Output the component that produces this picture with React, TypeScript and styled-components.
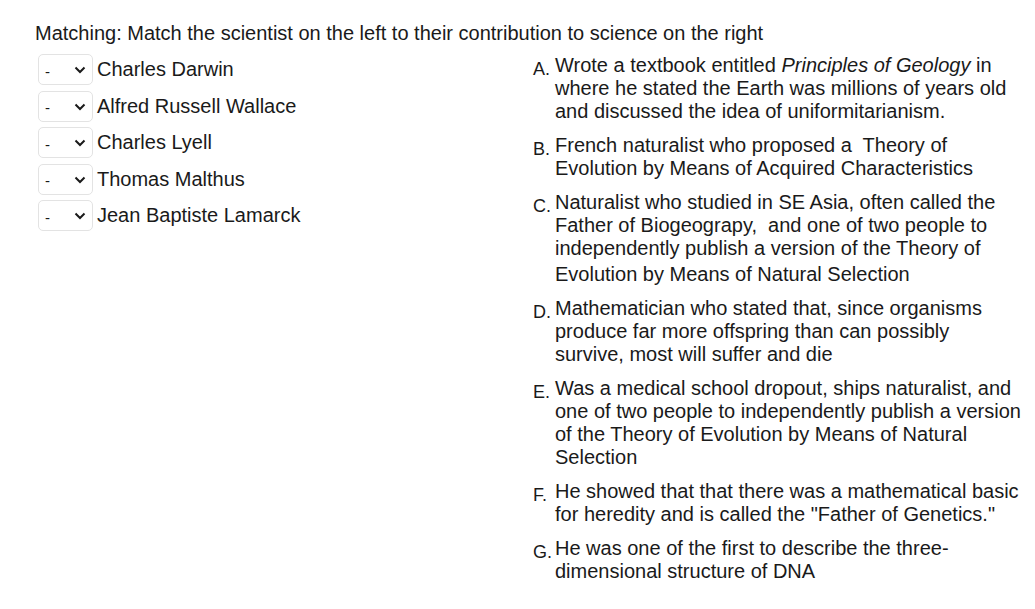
import * as React from 'react'
import styled, { createGlobalStyle } from 'styled-components'

const GlobalStyle = createGlobalStyle`
  body {
    margin: 0;
    background: #ffffff;
    font-family: "Liberation Sans", Arial, sans-serif;
    color: #1a1a1a;
  }
`

const Page = styled.div`
  padding: 21px 0 0 35px;
  width: 1035px;
  box-sizing: border-box;
`

const Prompt = styled.div`
  font-size: 20px;
  line-height: 24px;
  margin-bottom: 9px;
`

const Columns = styled.div`
  display: grid;
  grid-template-columns: 498px 490px;
`

const Stems = styled.div`
  display: flex;
  flex-direction: column;
  gap: 5px;
  padding-left: 3px;
`

const StemRow = styled.div`
  display: flex;
  align-items: center;
  gap: 4px;
  font-size: 20px;
  height: 31.5px;
`

const SelectBox = styled.div`
  position: relative;
  width: 55px;
  height: 31px;
  box-sizing: border-box;
  border: 1px solid #e3e3e3;
  border-radius: 5px;
  background: #fff;
`

const NativeSelect = styled.select`
  appearance: none;
  border: none;
  background: transparent;
  width: 100%;
  height: 100%;
  padding: 3px 0 0 6px;
  font-family: "Liberation Sans", Arial, sans-serif;
  font-size: 15px;
  color: #1a1a1a;
  outline: none;
`

const Chevron = styled.svg`
  position: absolute;
  right: 6px;
  top: 11px;
  pointer-events: none;
`

const Answers = styled.ol`
  list-style: none;
  margin: 0;
  padding: 0;
  display: flex;
  flex-direction: column;
  gap: 11px;
`

const Answer = styled.li`
  display: flex;
  align-items: flex-start;
`

const Letter = styled.span`
  flex: 0 0 22px;
  font-size: 18px;
  line-height: 23px;
  padding-top: 4px;
`

const AnswerText = styled.div`
  font-size: 20px;
  line-height: 23px;
  width: 468px;
`

const LastLine = styled.span`
  display: inline-block;
  margin-top: 3px;
`

const stems = [
  'Charles Darwin',
  'Alfred Russell Wallace',
  'Charles Lyell',
  'Thomas Malthus',
  'Jean Baptiste Lamarck',
]

const Select = () => (
  <SelectBox>
    <NativeSelect defaultValue="-">
      <option>-</option>
      {['A', 'B', 'C', 'D', 'E', 'F', 'G'].map((l) => (
        <option key={l}>{l}</option>
      ))}
    </NativeSelect>
    <Chevron width="12" height="8" viewBox="0 0 12 8">
      <path d="M1.5 1.5 L6 6 L10.5 1.5" fill="none" stroke="#1a1a1a" strokeWidth="2" />
    </Chevron>
  </SelectBox>
)

export default function App() {
  return (
    <Page>
      <GlobalStyle />
      <Prompt>
        Matching: Match the scientist on the left to their contribution to science on the right
      </Prompt>
      <Columns>
        <Stems>
          {stems.map((s) => (
            <StemRow key={s}>
              <Select />
              <span>{s}</span>
            </StemRow>
          ))}
        </Stems>
        <Answers>
          <Answer>
            <Letter>A.</Letter>
            <AnswerText>
              Wrote a textbook entitled <i>Principles of Geology</i> in where he stated the
              Earth was millions of years old and discussed the idea of uniformitarianism.
            </AnswerText>
          </Answer>
          <Answer>
            <Letter>B.</Letter>
            <AnswerText>
              French naturalist who proposed a&nbsp; Theory of Evolution by Means of Acquired
              Characteristics
            </AnswerText>
          </Answer>
          <Answer>
            <Letter>C.</Letter>
            <AnswerText>
              Naturalist who studied in SE Asia, often called the Father of Biogeograpy,&nbsp; and
              one of two people to independently publish a version of the Theory of
              <br />
              <LastLine>Evolution by Means of Natural Selection</LastLine>
            </AnswerText>
          </Answer>
          <Answer>
            <Letter>D.</Letter>
            <AnswerText>
              Mathematician who stated that, since organisms produce far more offspring than can
              possibly survive, most will suffer and die
            </AnswerText>
          </Answer>
          <Answer>
            <Letter>E.</Letter>
            <AnswerText>
              Was a medical school dropout, ships naturalist, and one of two people to
              independently publish a version of the Theory of Evolution by Means of Natural
              Selection
            </AnswerText>
          </Answer>
          <Answer>
            <Letter>F.</Letter>
            <AnswerText>
              He showed that that there was a mathematical basic for heredity and is called the
              "Father of Genetics."
            </AnswerText>
          </Answer>
          <Answer>
            <Letter>G.</Letter>
            <AnswerText>
              He was one of the first to describe the three-dimensional structure of DNA
            </AnswerText>
          </Answer>
        </Answers>
      </Columns>
    </Page>
  )
}
